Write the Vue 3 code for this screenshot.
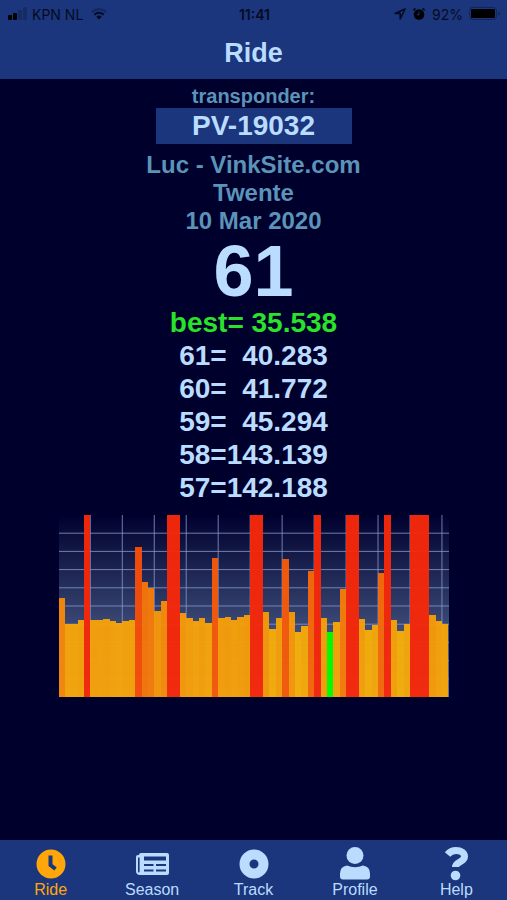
<script setup>
import { computed, shallowRef } from 'vue'

const MAX_SECONDS = 100

const transponder = shallowRef('PV-19032')
const activeTab = shallowRef('ride')

const tabs = [
  { id: 'ride', label: 'Ride' },
  { id: 'season', label: 'Season' },
  { id: 'track', label: 'Track' },
  { id: 'profile', label: 'Profile' },
  { id: 'help', label: 'Help' }
]

// Lap times in seconds, first lap first.
const laps = [
  54.6, 40.3, 40.3, 42.1, 131.2, 42.5, 42.1, 42.9, 41.6, 40.5,
  41.8, 42.1, 82.4, 63, 60.1, 47.3, 52.9, 140.1, 128.4, 46.3,
  43.4, 41.6, 43.6, 40.7, 76.4, 43.6, 44.1, 42.3, 43.8, 45.2,
  122.6, 139.5, 46.9, 37.2, 43.2, 75.6, 46.5, 35.9, 39.2, 69.4,
  115.7, 43.4, 35.538, 41.4, 59.3, 133.8, 126.1, 42.9, 36.8, 39.6,
  68.3, 118.9, 42.3, 36.1, 40.1, 137.4, 142.188, 143.139, 45.294, 41.772,
  40.283
]

const best = computed(() => Math.min(...laps))

const recentLaps = computed(() =>
  laps
    .map((seconds, index) => `${index + 1}=${seconds.toFixed(3).padStart(7)}`.replace(' ', '  '))
    .slice(-5)
    .reverse()
)

const bars = computed(() =>
  laps.map((seconds) => {
    const height = Math.min(seconds, MAX_SECONDS)
    const green = Math.round(250 - height * 2.1)
    return {
      height: `${height}%`,
      background: seconds === best.value ? '#00ff00' : `rgb(245, ${green}, 10)`
    }
  })
)

const rowLines = [1, 2, 3, 4, 5, 6, 7, 8, 9]
const columnLines = [5, 10, 15, 20, 25, 30, 35, 40, 45, 50, 55, 60]
</script>

<template>
  <div class="app">
    <header class="header">
      <div class="status">
        <div class="status-side">
          <svg class="signal" viewBox="0 0 20 14" aria-hidden="true">
            <rect x="0" y="8" width="4" height="5" rx="1" />
            <rect x="5" y="6" width="4" height="7" rx="1" />
            <rect x="10" y="3" width="4" height="10" rx="1" opacity="0.2" />
            <rect x="15" y="0" width="4" height="13" rx="1" opacity="0.2" />
          </svg>
          <span>KPN NL</span>
          <svg class="wifi" viewBox="0 0 16 12" aria-hidden="true">
            <path d="M1 4.2a10 10 0 0 1 14 0" opacity="0.35" />
            <path d="M3.4 6.7a6.6 6.6 0 0 1 9.2 0" />
            <path class="wifi-dot" d="M5.3 8.8a4 4 0 0 1 5.4 0L8 11.6z" />
          </svg>
        </div>
        <span class="status-time">11:41</span>
        <div class="status-side status-right">
          <svg class="location" viewBox="0 0 12 12" aria-hidden="true">
            <path d="M11 1L1 5.4h5.2V11z" />
          </svg>
          <svg class="alarm" viewBox="0 0 14 14" aria-hidden="true">
            <circle cx="7" cy="7.5" r="5.3" />
            <path class="alarm-legs" d="M1.4 3.4l2-2M12.6 3.4l-2-2" />
            <path class="alarm-hands" d="M7 4.6v3.2H4.8" />
          </svg>
          <span>92%</span>
          <svg class="battery" viewBox="0 0 32 14" aria-hidden="true">
            <rect class="battery-case" x="0.5" y="0.5" width="27" height="12" rx="3" />
            <rect x="2" y="2" width="24" height="9" rx="1" />
            <path d="M29.5 4.5c2 1 2 3 0 4z" opacity="0.4" />
          </svg>
        </div>
      </div>
      <h1 class="title">Ride</h1>
    </header>

    <main class="content">
      <label class="transponder-label" for="transponder">transponder:</label>
      <input
        id="transponder"
        v-model="transponder"
        class="transponder-input"
        name="transponder"
        type="text"
      >

      <div class="info">
        <div>Luc - VinkSite.com</div>
        <div>Twente</div>
        <div>10 Mar 2020</div>
      </div>

      <div class="count">{{ laps.length }}</div>
      <div class="best">best= {{ best.toFixed(3) }}</div>
      <div
        v-for="lap in recentLaps"
        :key="lap"
        class="lap"
      >{{ lap }}</div>

      <div class="chart">
        <svg class="chart-grid" viewBox="0.1 0 61 10" preserveAspectRatio="none" aria-hidden="true">
          <line
            v-for="y in rowLines"
            :key="`row-${y}`"
            x1="0"
            x2="62"
            :y1="y"
            :y2="y"
          />
          <line
            v-for="x in columnLines"
            :key="`column-${x}`"
            :x1="x"
            :x2="x"
            y1="0"
            y2="10"
          />
        </svg>
        <div
          v-for="(bar, index) in bars"
          :key="index"
          class="bar"
          :style="bar"
        />
      </div>
    </main>

    <nav class="tabs">
      <button
        v-for="tab in tabs"
        :key="tab.id"
        class="tab"
        :class="{ 'tab-active': tab.id === activeTab }"
        type="button"
        @click="activeTab = tab.id"
      >
        <svg class="tab-icon" viewBox="0 0 36 36" aria-hidden="true">
          <template v-if="tab.id === 'ride'">
            <circle cx="18" cy="18" r="14.5" />
            <path class="clock-hands" d="M17.500 9.500v9.500l5 4" />
          </template>
          <template v-else-if="tab.id === 'season'">
            <path
              fill-rule="evenodd"
              d="M7 7h26q2 0 2 2v18q0 2-2 2H6q-4 0-4-4V11q0-2 2-2h1q0-2 2-2zM4 11.500V25q0 1.500 0.800 1.500t0.800-1.500V11.500zM10 10.500h22v4H10zM10 18h9.500v2H10zM22 18h10v2H22zM10 23.500h9.500v2H10zM22 23.500h10v2H22z"
            />
          </template>
          <template v-else-if="tab.id === 'track'">
            <path
              fill-rule="evenodd"
              d="M18 3.500a14.500 14.500 0 1 1 0 29a14.500 14.500 0 1 1 0-29zM18 13.500a4.500 4.500 0 1 0 0 9a4.500 4.500 0 1 0 0-9z"
            />
          </template>
          <template v-else-if="tab.id === 'profile'">
            <circle cx="18" cy="9.500" r="8.500" />
            <path d="M10 19.500q8 3.500 16 0q7 1 7 8v3q0 3-3 3H6q-3 0-3-3v-3q0-7 7-8z" />
          </template>
          <template v-else>
            <path class="question" d="M9.500 8.500C12 5.500 14.500 4.500 18 4.500C23 4.500 26.500 7 26.500 10.500C26.500 16.500 17.500 15.500 17.500 21" />
            <circle cx="17.500" cy="29.500" r="4.800" />
          </template>
        </svg>
        <span>{{ tab.label }}</span>
      </button>
    </nav>
  </div>
</template>

<style>
body {
  background: #00002d;
}
</style>

<style scoped>
.app {
  background: #00002d;
  color: #b9dcff;
  display: flex;
  flex-direction: column;
  font-family: "Liberation Sans", Arial, sans-serif;
  min-height: 100vh;
}

.header {
  background: #1b367c;
}

.status {
  align-items: center;
  color: #050b22;
  display: grid;
  font-family: Inter, sans-serif;
  font-size: 14px;
  grid-template-columns: 1fr auto 1fr;
  height: 28px;
  padding: 0 6px 0 8px;
}

.status-side {
  align-items: center;
  display: flex;
  gap: 4px;
}

.status-right {
  gap: 6px;
  justify-content: flex-end;
}

.status-time {
  font-weight: 600;
}

.signal {
  height: 14px;
  width: 20px;
}

.wifi {
  fill: none;
  height: 12px;
  margin-left: 4px;
  stroke: #050b22;
  stroke-width: 2;
  width: 16px;
}

.wifi-dot {
  fill: #050b22;
  stroke: none;
}

.location {
  fill: none;
  height: 12px;
  stroke: #050b22;
  stroke-linejoin: round;
  stroke-width: 1.6;
  width: 12px;
}

.alarm {
  height: 14px;
  width: 14px;
}

.alarm-legs,
.alarm-hands {
  fill: none;
  stroke: #050b22;
  stroke-width: 2;
}

.alarm-hands {
  stroke: #1b367c;
  stroke-width: 1;
}

.battery {
  height: 14px;
  width: 32px;
}

.battery-case {
  fill: none;
  opacity: 0.4;
  stroke: #050b22;
}

.title {
  font-size: 27px;
  font-weight: 700;
  line-height: 51px;
  margin: 0;
  text-align: center;
}

.content {
  align-items: center;
  display: flex;
  flex: 1;
  flex-direction: column;
  font-size: 28px;
  font-weight: 700;
  line-height: 33px;
  padding: 5px 0 16px;
}

.transponder-label {
  color: #5b94b8;
  font-size: 20px;
  line-height: 24px;
}

.transponder-input {
  background: #1b367c;
  border: 0;
  box-sizing: border-box;
  color: inherit;
  font: inherit;
  height: 36px;
  outline: none;
  padding: 0 8px;
  text-align: center;
  width: 196px;
}

.info {
  color: #5b94b8;
  font-size: 24px;
  line-height: 28px;
  margin-top: 7px;
  text-align: center;
}

.count {
  font-size: 72px;
  line-height: 72px;
}

.best {
  color: #2ae22a;
  line-height: 32px;
}

.lap {
  white-space: pre;
}

.chart {
  align-items: flex-end;
  background: linear-gradient(#00002d, #6078a4);
  display: flex;
  height: 182px;
  margin-top: 11px;
  max-width: 390px;
  position: relative;
  width: 77%;
}

.chart-grid {
  height: 100%;
  inset: 0;
  position: absolute;
  width: 100%;
}

.chart-grid line {
  stroke: #8798d0;
  stroke-opacity: 0.8;
  stroke-width: 1px;
  vector-effect: non-scaling-stroke;
}

.bar {
  flex: 1;
  opacity: 0.97;
  position: relative;
}

.tabs {
  background: #1b367c;
  bottom: 0;
  display: flex;
  height: 60px;
  position: sticky;
}

.tab {
  align-items: center;
  background: none;
  border: 0;
  color: inherit;
  cursor: pointer;
  display: flex;
  flex: 1;
  flex-direction: column;
  font: inherit;
  font-size: 16px;
  line-height: 16px;
  padding: 6px 0 0;
}

.tab-active {
  color: #ffa60a;
}

.tab-icon {
  fill: currentColor;
  height: 36px;
  width: 36px;
}

.clock-hands {
  fill: none;
  stroke: #1b367c;
  stroke-width: 4;
}

.question {
  fill: none;
  stroke: currentColor;
  stroke-width: 7;
}
</style>
